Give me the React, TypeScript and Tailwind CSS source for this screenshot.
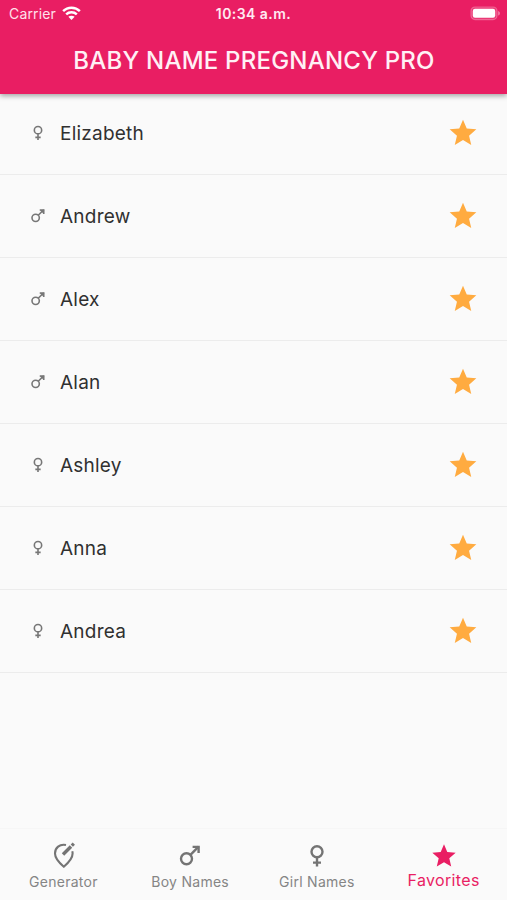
import React from "react";

type Gender = "girl" | "boy";

const names: { name: string; gender: Gender }[] = [
  { name: "Elizabeth", gender: "girl" },
  { name: "Andrew", gender: "boy" },
  { name: "Alex", gender: "boy" },
  { name: "Alan", gender: "boy" },
  { name: "Ashley", gender: "girl" },
  { name: "Anna", gender: "girl" },
  { name: "Andrea", gender: "girl" },
];

function Female({ className }: { className: string }) {
  return (
    <svg viewBox="0 0 24 24" fill="none" stroke="currentColor" strokeWidth="2.4" className={className}>
      <circle cx="12" cy="7.7" r="5.5" />
      <path d="M12 13.2V22.6M8 18.6h8" />
    </svg>
  );
}

function Male({ className, solidHead = false }: { className: string; solidHead?: boolean }) {
  return (
    <svg viewBox="0 0 24 24" fill="none" stroke="currentColor" strokeWidth="2.4" className={className}>
      <circle cx="8.5" cy="14.8" r="5.5" />
      <path d="M12.4 10.9L20.6 2.7" />
      <path d="M14.6 2.9h6v6" fill={solidHead ? "currentColor" : "none"} />
    </svg>
  );
}

function Star({ className }: { className: string }) {
  return (
    <svg viewBox="0 0 24 24" fill="currentColor" className={className}>
      <path d="M12 17.27L18.18 21l-1.64-7.03L22 9.24l-7.19-.61L12 2 9.19 8.63 2 9.24l5.46 4.73L5.82 21z" />
    </svg>
  );
}

function PinPencil() {
  return (
    <svg viewBox="0 0 26 28" fill="none" stroke="currentColor" className="ml-[2px] h-7 w-[26px]">
      <path d="M15 3C8.6 1.7 4 5.9 4 11.5C4 16.3 8.3 20.9 12.8 24.7C17.3 20.9 21.6 16.3 21.6 11.5C21.6 10.7 21.5 9.9 21.3 9.2" strokeWidth="2.1" />
      <path d="M12 12.5L20 4.5" strokeWidth="3.4" />
      <path d="M20.8 3.7L22.8 1.7" strokeWidth="3.2" />
    </svg>
  );
}

function Wifi() {
  return (
    <svg viewBox="0 0 20 15" fill="none" stroke="currentColor" strokeWidth="2.6" className="h-[15px] w-[19px]">
      <path d="M1.2 5.1C6 .3 14 .3 18.8 5.1M4.4 8.5c3.1-3 8.1-3 11.2 0" />
      <path d="M10 14.3l-3.3-3.3c1.8-1.6 4.8-1.6 6.6 0z" fill="currentColor" stroke="none" />
    </svg>
  );
}

function Battery() {
  return (
    <svg viewBox="0 0 31 15" className="h-[15px] w-[31px]">
      <rect x="1" y="1" width="26" height="12.6" rx="4" fill="#fff" fillOpacity=".12" stroke="#fff" strokeOpacity=".28" strokeWidth="1.2" />
      <rect x="2.8" y="2.8" width="22.4" height="9" rx="2.2" fill="#fff" />
      <path d="M28.2 5c2.2.9 2.2 3.7 0 4.6z" fill="#fff" fillOpacity=".45" />
    </svg>
  );
}

function Tab({ icon, label }: { icon: React.ReactNode; label: string }) {
  return (
    <div className="flex flex-1 flex-col items-center text-[#747474]">
      <div className="mt-[13px] flex h-7 items-center">{icon}</div>
      <span className="mt-[2px] text-[14px] leading-5 tracking-[0.28px] text-[#858585]">{label}</span>
    </div>
  );
}

export default function App() {
  return (
    <div className="flex h-[900px] w-[507px] flex-col overflow-hidden bg-[#fafafa] font-['Inter','Liberation_Sans',sans-serif]">
      <header className="relative z-10 h-[94px] shrink-0 bg-[#e91e63] text-white shadow-[0_2px_5px_rgba(0,0,0,0.35)]">
        <div className="grid h-[26px] grid-cols-3 items-center pl-[9px] pr-[9px]">
          <div className="flex items-center gap-[6px] text-[#ffe1eb]">
            <span className="text-[14px] tracking-[0.15px]">Carrier</span>
            <span className="text-white"><Wifi /></span>
          </div>
          <span className="whitespace-nowrap text-center text-[14px] font-semibold tracking-[0.45px] text-[#ffeaf1]">10:34 a.m.</span>
          <div className="-mr-[3px] flex justify-end"><Battery /></div>
        </div>
        <h1 className="mt-[17px] whitespace-nowrap pl-px text-center text-[24px] font-medium leading-9 tracking-[0.22px] text-[#fff0f5]">
          BABY NAME PREGNANCY PRO
        </h1>
      </header>
      <main className="-mt-[2px] flex-1">
        {names.map(({ name, gender }) => (
          <div key={name} className="flex h-[83px] items-center border-b border-[#ececec] pl-[29.5px] pr-7">
            <div className="w-[30.5px] text-[#777]">
              {gender === "girl" ? <Female className="h-4 w-4" /> : <Male solidHead className="h-4 w-4" />}
            </div>
            <span className="flex-1 pt-[2px] text-[19px] tracking-[0.22px] text-[#303030]">{name}</span>
            <Star className="h-8 w-8 text-[#ffab40]" />
          </div>
        ))}
      </main>
      <nav className="flex h-[72px] shrink-0 border-t border-[#f6f6f6] bg-[#fafafa]">
        <Tab label="Generator" icon={<PinPencil />} />
        <Tab label="Boy Names" icon={<Male className="h-6 w-6" />} />
        <Tab label="Girl Names" icon={<Female className="h-6 w-6" />} />
        <div className="flex flex-1 flex-col items-center text-[#e91e63]">
          <Star className="mt-[13px] h-7 w-7" />
          <span className="text-[16px] leading-5 tracking-[0.35px]">Favorites</span>
        </div>
      </nav>
    </div>
  );
}
